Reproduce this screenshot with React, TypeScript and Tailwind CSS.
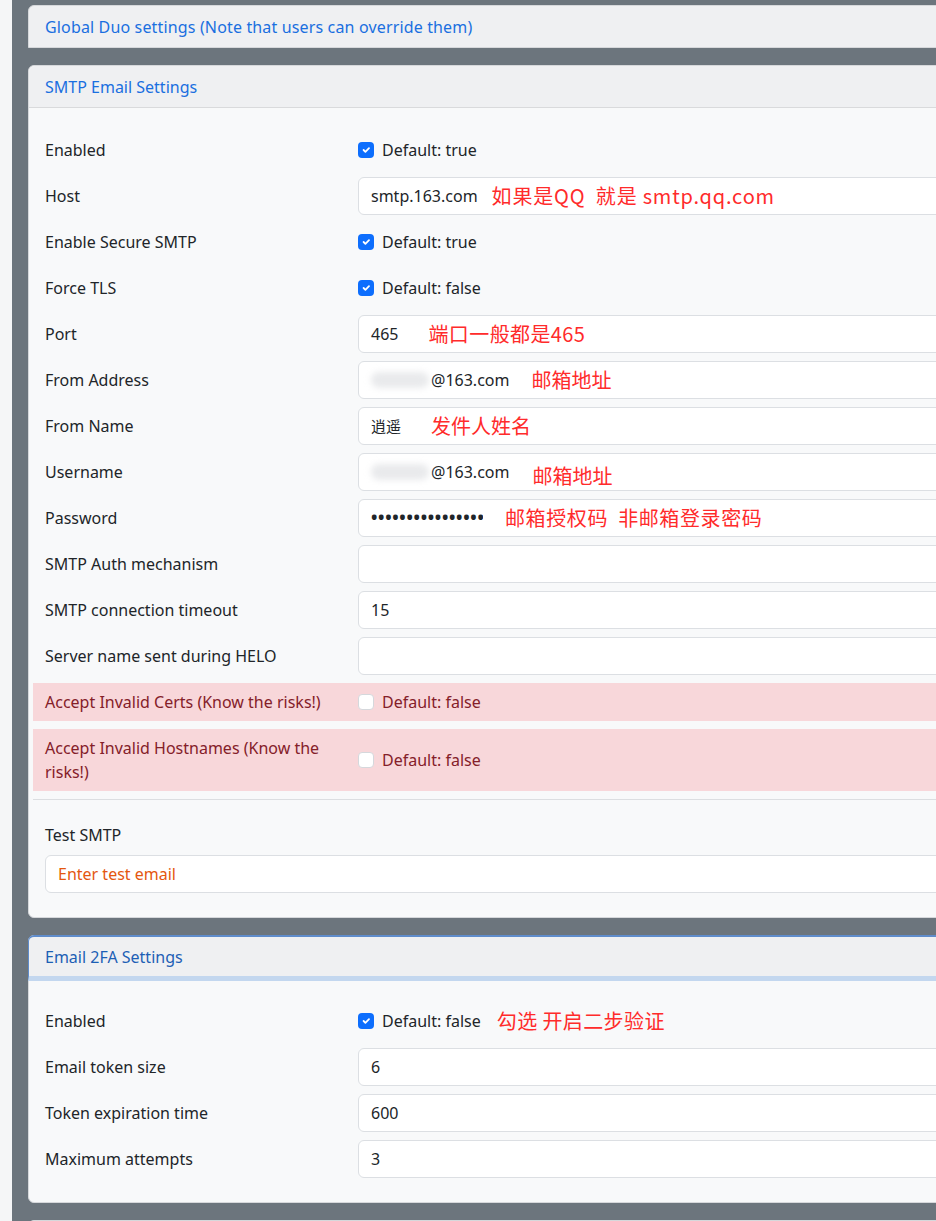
import React from 'react';

const font = { fontFamily: '"Noto Sans", "Noto Sans CJK SC", sans-serif' };

function Check({ checked }: { checked: boolean }) {
    return checked ? (
        <span className="w-4 h-4 rounded-[4px] bg-[#0d6efd] flex items-center justify-center shrink-0">
            <svg viewBox="0 0 20 20" className="w-3 h-3" fill="none" stroke="#fff" strokeWidth="3" strokeLinecap="round" strokeLinejoin="round">
                <path d="M6 10l3 3l6-6" />
            </svg>
        </span>
    ) : (
        <span className="w-4 h-4 rounded-[4px] bg-white border border-[#d5d8dc] shrink-0" />
    );
}

function Note({ children, className = '' }: { children: React.ReactNode; className?: string }) {
    return (
        <span
            className={`text-[20px] text-[#ff2b2b] whitespace-pre ${className}`}
            style={{ fontFamily: '"Noto Sans CJK SC", sans-serif' }}
        >
            {children}
        </span>
    );
}

function Field({ children }: { children?: React.ReactNode }) {
    return (
        <div className="h-[38px] flex-1 bg-white border border-[#dcdfe3] rounded-[6px] px-3 flex items-center text-[#212529]">
            {children}
        </div>
    );
}

function Row({ label, danger, tall, children }: { label: string; danger?: boolean; tall?: boolean; children: React.ReactNode }) {
    return (
        <div
            className={`flex items-center mb-2 px-3 ${tall ? 'h-[62px]' : 'h-[38px]'} ${danger ? 'bg-[#f8d7da] text-[#842029]' : 'text-[#212529]'}`}
        >
            <div className="w-[313px] shrink-0 pr-4 leading-6">{label}</div>
            <div className="flex-1 flex items-center">{children}</div>
        </div>
    );
}

function CheckValue({ checked, text, note }: { checked: boolean; text: string; note?: string }) {
    return (
        <div className="flex items-center gap-2">
            <Check checked={checked} />
            <span>{text}</span>
            {note && <Note className="ml-2 tracking-[0.4px]">{note}</Note>}
        </div>
    );
}

function Blurred() {
    return <span className="inline-block w-[58px] h-[16px] rounded-full bg-[#e9eaec] blur-[3px] mr-[2px]" />;
}

export default function App() {
    return (
        <div className="w-[936px] h-[1221px] overflow-hidden flex bg-[#6c757d] text-[16px]" style={font}>
            <div className="w-[12px] shrink-0 bg-[#f5f6f7]" />
            <div className="pl-4 pt-[5px] flex flex-col gap-[17px]">
                {/* global duo */}
                <div className="w-[1100px] shrink-0 border border-[#d6d8db] rounded-t-[6px] bg-[#eff0f2] h-[43px] px-4 flex items-center text-[#1a6fe0] tracking-[0.15px]">
                    Global Duo settings (Note that users can override them)
                </div>

                {/* smtp */}
                <div className="w-[1100px] shrink-0 border border-[#d6d8db] rounded-[6px] bg-[#f8f9fa]">
                    <div className="h-[42px] px-4 flex items-center bg-[#eff0f2] border-b border-[#d9dadc] rounded-t-[6px] text-[#1a6fe0]">
                        SMTP Email Settings
                    </div>
                    <div className="px-[4px] pt-[23px] pb-4">
                        <Row label="Enabled"><CheckValue checked text="Default: true" /></Row>
                        <Row label="Host">
                            <Field>smtp.163.com<Note className="ml-[14px] tracking-[0.8px]">如果是QQ  就是 smtp.qq.com</Note></Field>
                        </Row>
                        <Row label="Enable Secure SMTP"><CheckValue checked text="Default: true" /></Row>
                        <Row label="Force TLS"><CheckValue checked text="Default: false" /></Row>
                        <Row label="Port">
                            <Field>465<Note className="ml-[30px] tracking-[0.4px]">端口一般都是465</Note></Field>
                        </Row>
                        <Row label="From Address">
                            <Field><Blurred />@163.com<Note className="ml-[22px]">邮箱地址</Note></Field>
                        </Row>
                        <Row label="From Name">
                            <Field><span className="text-[15px]">逍遥</span><Note className="ml-[30px]">发件人姓名</Note></Field>
                        </Row>
                        <Row label="Username">
                            <Field><Blurred />@163.com<Note className="ml-[23px] mt-[8px]">邮箱地址</Note></Field>
                        </Row>
                        <Row label="Password">
                            <Field>
                                <span className="inline-block w-[112px] overflow-hidden whitespace-nowrap text-[17px] tracking-[0.7px] font-bold">••••••••••••••••</span>
                                <Note className="ml-[22px] tracking-[0.6px]">邮箱授权码  非邮箱登录密码</Note>
                            </Field>
                        </Row>
                        <Row label="SMTP Auth mechanism"><Field /></Row>
                        <Row label="SMTP connection timeout"><Field>15</Field></Row>
                        <Row label="Server name sent during HELO"><Field /></Row>
                        <Row label="Accept Invalid Certs (Know the risks!)" danger><CheckValue checked={false} text="Default: false" /></Row>
                        <Row label="Accept Invalid Hostnames (Know the risks!)" danger tall><CheckValue checked={false} text="Default: false" /></Row>
                        <div className="border-t border-[#dcdee1] pt-[23px] px-3">
                            <div className="text-[#212529] leading-6 mb-2">Test SMTP</div>
                            <div className="h-[38px] bg-white border border-[#dcdfe3] rounded-[6px] px-3 flex items-center text-[#e4570f] mb-2">
                                Enter test email
                            </div>
                        </div>
                    </div>
                </div>

                {/* email 2fa */}
                <div className="w-[1100px] shrink-0 border border-[#d6d8db] rounded-[6px] bg-[#f8f9fa]">
                    <div className="h-[46px] px-4 flex items-center bg-[#eff0f2] border-t-2 border-l border-[#5f8ccb] border-b-[5px] border-b-[#c3d7ef] rounded-t-[6px] text-[#1d5fb5] -mt-px -ml-px">
                        Email 2FA Settings
                    </div>
                    <div className="px-[4px] pt-[21px] pb-4">
                        <Row label="Enabled"><CheckValue checked text="Default: false" note="勾选 开启二步验证" /></Row>
                        <Row label="Email token size"><Field>6</Field></Row>
                        <Row label="Token expiration time"><Field>600</Field></Row>
                        <Row label="Maximum attempts"><Field>3</Field></Row>
                    </div>
                </div>

                <div className="w-[1100px] shrink-0 border border-[#d6d8db] rounded-t-[6px] bg-[#f8f9fa] h-[43px]" />
            </div>
        </div>
    );
}
